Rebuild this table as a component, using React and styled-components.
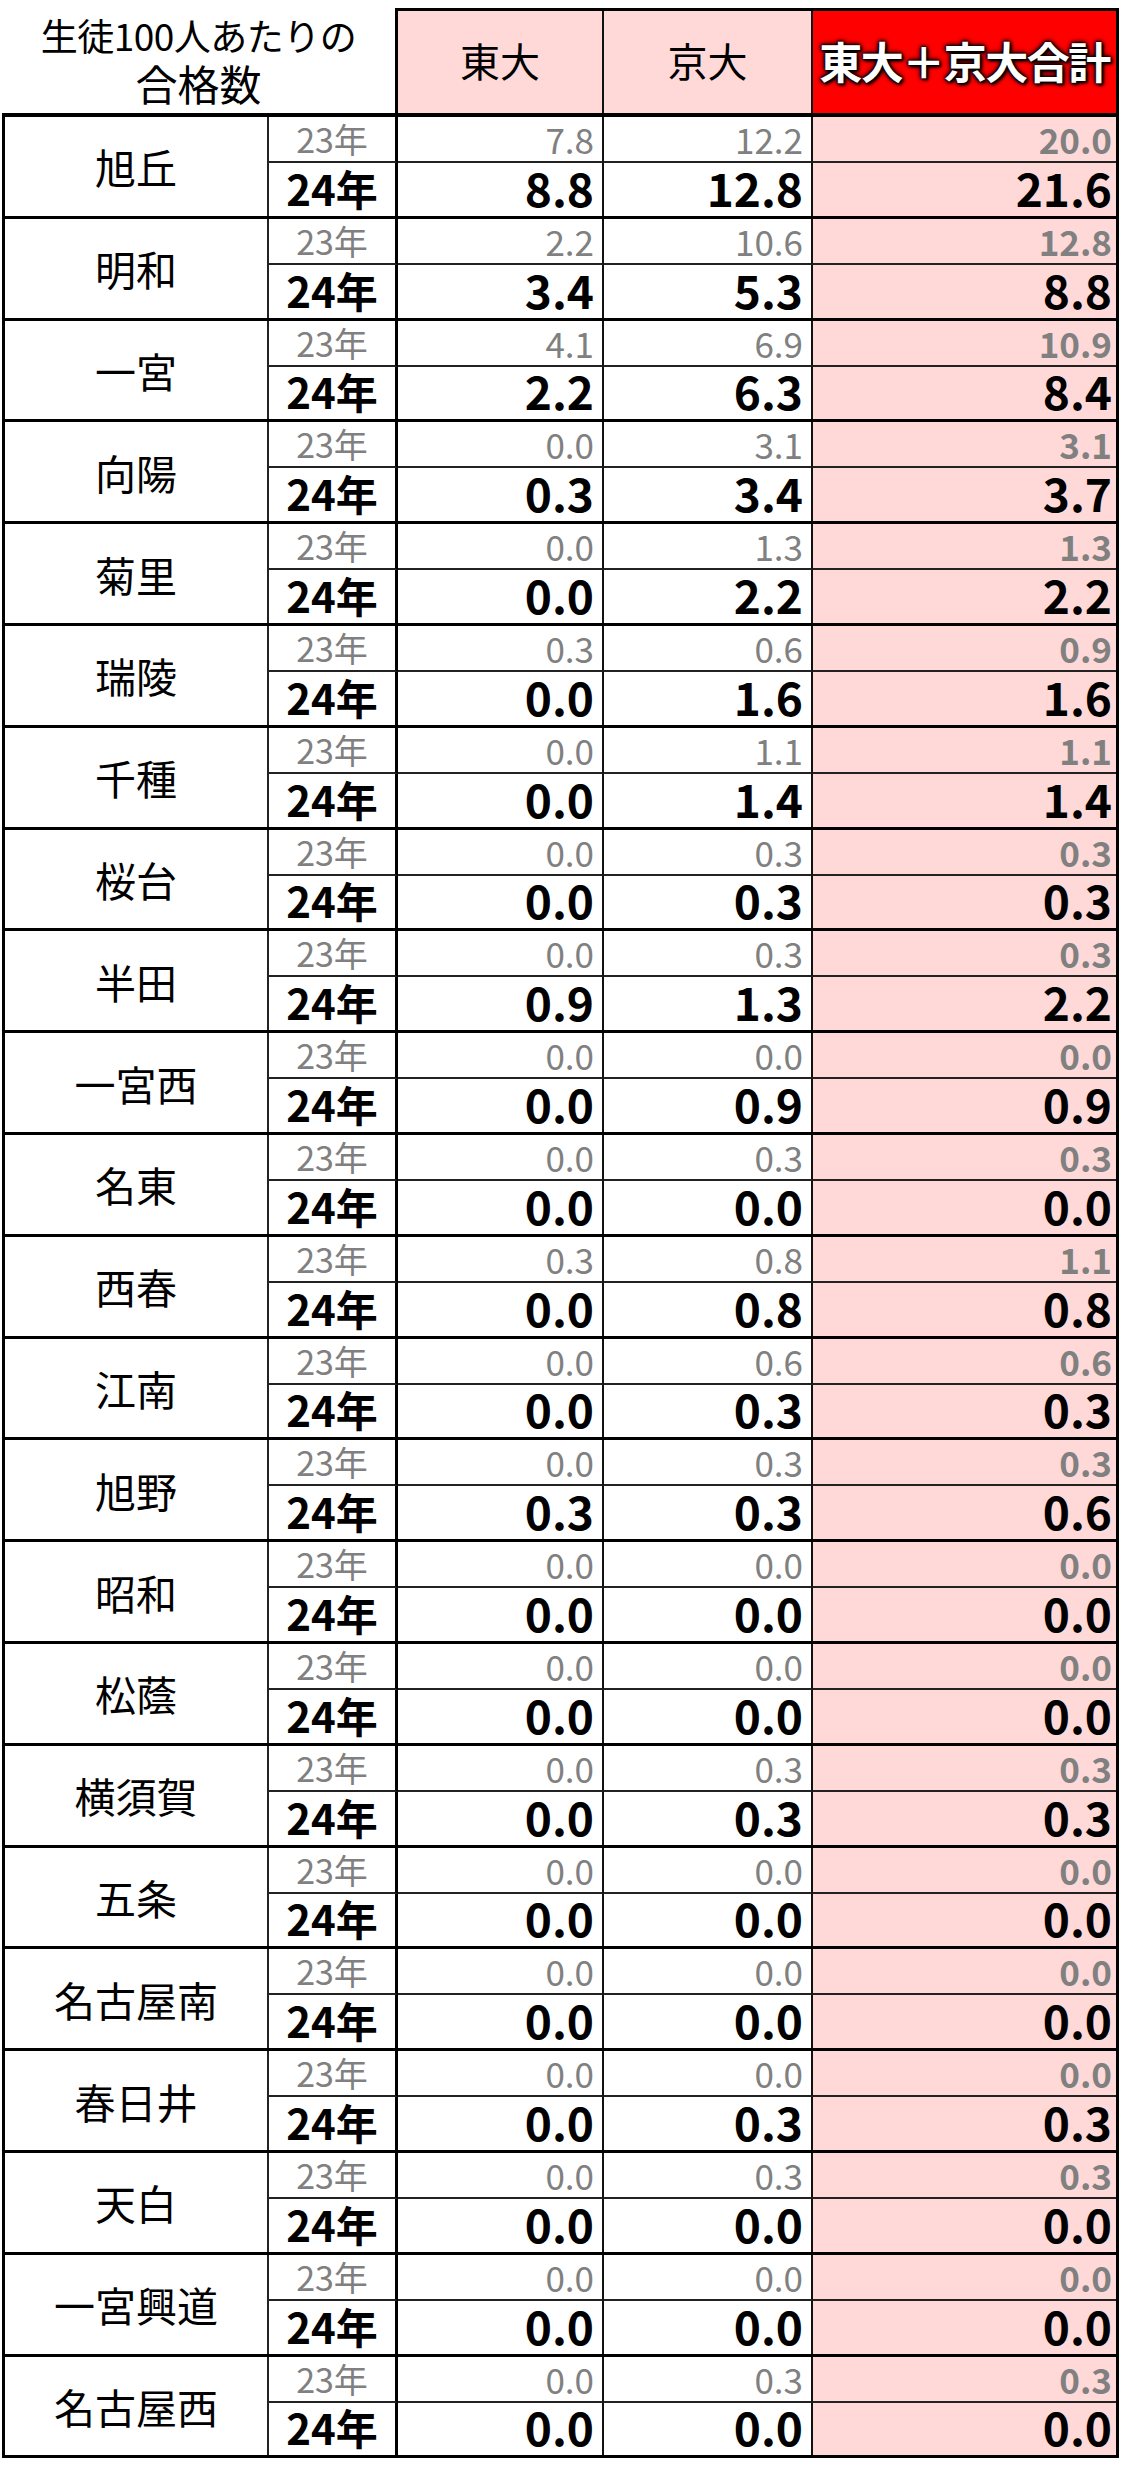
import React from "react";
import styled, { createGlobalStyle } from "styled-components";

const GlobalStyle = createGlobalStyle`
  * { box-sizing: border-box; }
  body {
    margin: 0;
    background: #fff;
    font-family: "Noto Sans CJK JP", "Noto Sans", sans-serif;
  }
`;

const schools = [
  ["旭丘", ["7.8", "12.2", "20.0"], ["8.8", "12.8", "21.6"]],
  ["明和", ["2.2", "10.6", "12.8"], ["3.4", "5.3", "8.8"]],
  ["一宮", ["4.1", "6.9", "10.9"], ["2.2", "6.3", "8.4"]],
  ["向陽", ["0.0", "3.1", "3.1"], ["0.3", "3.4", "3.7"]],
  ["菊里", ["0.0", "1.3", "1.3"], ["0.0", "2.2", "2.2"]],
  ["瑞陵", ["0.3", "0.6", "0.9"], ["0.0", "1.6", "1.6"]],
  ["千種", ["0.0", "1.1", "1.1"], ["0.0", "1.4", "1.4"]],
  ["桜台", ["0.0", "0.3", "0.3"], ["0.0", "0.3", "0.3"]],
  ["半田", ["0.0", "0.3", "0.3"], ["0.9", "1.3", "2.2"]],
  ["一宮西", ["0.0", "0.0", "0.0"], ["0.0", "0.9", "0.9"]],
  ["名東", ["0.0", "0.3", "0.3"], ["0.0", "0.0", "0.0"]],
  ["西春", ["0.3", "0.8", "1.1"], ["0.0", "0.8", "0.8"]],
  ["江南", ["0.0", "0.6", "0.6"], ["0.0", "0.3", "0.3"]],
  ["旭野", ["0.0", "0.3", "0.3"], ["0.3", "0.3", "0.6"]],
  ["昭和", ["0.0", "0.0", "0.0"], ["0.0", "0.0", "0.0"]],
  ["松蔭", ["0.0", "0.0", "0.0"], ["0.0", "0.0", "0.0"]],
  ["横須賀", ["0.0", "0.3", "0.3"], ["0.0", "0.3", "0.3"]],
  ["五条", ["0.0", "0.0", "0.0"], ["0.0", "0.0", "0.0"]],
  ["名古屋南", ["0.0", "0.0", "0.0"], ["0.0", "0.0", "0.0"]],
  ["春日井", ["0.0", "0.0", "0.0"], ["0.0", "0.3", "0.3"]],
  ["天白", ["0.0", "0.3", "0.3"], ["0.0", "0.0", "0.0"]],
  ["一宮興道", ["0.0", "0.0", "0.0"], ["0.0", "0.0", "0.0"]],
  ["名古屋西", ["0.0", "0.3", "0.3"], ["0.0", "0.0", "0.0"]],
];

const PINK = "#ffd8d8";
const GRAY = "#808080";

function App() {
  return (
    <Page>
      <GlobalStyle />
      <HeaderRow>
        <HeaderLabel>
          <LabelTop>生徒100人あたりの</LabelTop>
          <LabelBottom>合格数</LabelBottom>
        </HeaderLabel>
        <HeadCells>
          <HeadCell $w={206}>東大</HeadCell>
          <HeadCell $w={209}>京大</HeadCell>
          <TotalHead>東大＋京大合計</TotalHead>
        </HeadCells>
      </HeaderRow>
      <Table>
        {schools.map(([name, prev, cur]) => (
          <Group key={name}>
            <Name>{name}</Name>
            <Year>23年</Year>
            <Num>{prev[0]}</Num>
            <Num>{prev[1]}</Num>
            <Num $total>{prev[2]}</Num>
            <Year $bold>24年</Year>
            <Num $bold>{cur[0]}</Num>
            <Num $bold>{cur[1]}</Num>
            <Num $bold $total>{cur[2]}</Num>
          </Group>
        ))}
      </Table>
    </Page>
  );
}

const Page = styled.div`
  width: 1125px;
  padding: 8px 0 20px 2px;
  background: #fff;
`;

const HeaderRow = styled.div`
  display: flex;
  align-items: stretch;
  height: 105px;
`;

const HeaderLabel = styled.div`
  width: 393px;
  display: flex;
  flex-direction: column;
  align-items: center;
  justify-content: center;
  gap: 2px;
  color: #000;
  line-height: 1.15;
`;

const LabelTop = styled.div`
  font-size: 37px;
  letter-spacing: -0.5px;
  white-space: nowrap;
`;

const LabelBottom = styled.div`
  font-size: 42px;
`;

const HeadCells = styled.div`
  display: flex;
  border-top: 3px solid #000;
  border-left: 3px solid #000;
  border-right: 3px solid #000;
`;

const HeadCell = styled.div`
  width: ${(p) => p.$w}px;
  background: ${PINK};
  border-right: 2px solid #111;
  display: flex;
  align-items: center;
  justify-content: center;
  font-size: 40px;
  color: #000;
  padding-bottom: 4px;
`;

const TotalHead = styled.div`
  width: 303px;
  background: #ff0000;
  display: flex;
  align-items: center;
  justify-content: center;
  font-size: 43px;
  font-weight: 700;
  color: #fff;
  white-space: nowrap;
  letter-spacing: -1.5px;
  padding-bottom: 4px;
  text-shadow: 0 0 2px #000, 0 0 3px #000, 0 0 4px #000, 0 0 6px #000,
    2px 2px 3px #000;
`;

const Table = styled.div`
  width: 1117px;
  border-top: 4px solid #000;
  border-left: 3px solid #000;
  border-right: 3px solid #000;
`;

const Group = styled.div`
  display: grid;
  grid-template-columns: 264px 129px 206px 209px 303px;
  grid-template-rows: 46px 52.8px;
  border-bottom: 3px solid #000;
`;

const Name = styled.div`
  grid-row: 1 / span 2;
  border-right: 2px solid #222;
  display: flex;
  align-items: center;
  justify-content: center;
  font-size: 41px;
  color: #000;
  white-space: nowrap;
`;

const Year = styled.div`
  border-right: 3px solid #000;
  border-bottom: ${(p) => (p.$bold ? "none" : "2px solid #222")};
  display: flex;
  align-items: flex-end;
  justify-content: center;
  font-size: ${(p) => (p.$bold ? "42px" : "34px")};
  font-weight: ${(p) => (p.$bold ? 700 : 400)};
  color: ${(p) => (p.$bold ? "#000" : GRAY)};
  line-height: 1;
  padding-bottom: ${(p) => (p.$bold ? "7px" : "5px")};
`;

const Num = styled.div`
  background: ${(p) => (p.$total ? PINK : "#fff")};
  border-right: ${(p) => (p.$total ? "none" : "2px solid #111")};
  border-bottom: ${(p) => (p.$bold ? "none" : "2px solid #222")};
  display: flex;
  align-items: flex-end;
  justify-content: flex-end;
  padding-right: ${(p) => (p.$total ? "4px" : "8px")};
  padding-bottom: ${(p) => (p.$bold ? "6px" : "5px")};
  font-size: ${(p) => (p.$bold ? "46px" : "35px")};
  font-weight: ${(p) => (p.$bold || p.$total ? 700 : 400)};
  color: ${(p) => (p.$bold ? "#000" : GRAY)};
  line-height: 1;
`;

export default App;
